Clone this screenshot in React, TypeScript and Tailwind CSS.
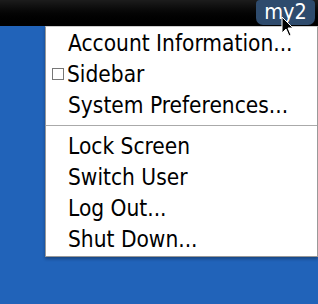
const items1 = ["Account Information...", "Sidebar", "System Preferences..."];
const items2 = ["Lock Screen", "Switch User", "Log Out...", "Shut Down..."];

function Cursor() {
  return (
    <svg
      className="absolute left-[281px] top-[16px]"
      width="14"
      height="22"
      viewBox="0 0 14 22"
    >
      <path
        d="M1 1 L1 17 L5 13 L8 20 L10 19 L7 12 L12 12 Z"
        fill="#000"
        stroke="#fff"
        strokeWidth="1"
      />
    </svg>
  );
}

function Item({ label }: { label: string }) {
  return (
    <div className="h-[31px] flex items-center pl-[22px]">
      {label === "Sidebar" && (
        <span className="-ml-[16px] mr-[3px] w-[12px] h-[12px] border border-[#777] bg-white" />
      )}
      <span>{label}</span>
    </div>
  );
}

export default function App() {
  return (
    <div
      className="relative w-[318px] h-[304px] bg-[#2163b9] overflow-hidden"
      style={{ fontFamily: '"DejaVu Sans Condensed", "DejaVu Sans", sans-serif' }}
    >
      <div className="h-[26px] bg-gradient-to-b from-[#1c1c1c] to-[#000] flex justify-end">
        <div className="h-[25px] w-[59px] mr-[3px] rounded-b-[7px] rounded-t-[4px] bg-[#2e4b6d] text-white text-[21.5px] leading-[24px] text-center">
          my2
        </div>
      </div>
      <div className="ml-[45px] w-[273px] bg-white border border-[#999] border-t-[#ccc] pb-[2px] text-[22.5px] leading-[26px] text-black shadow-[0_2px_3px_rgba(0,0,0,0.3)]">
        {items1.map((l) => (
          <Item key={l} label={l} />
        ))}
        <div className="h-[10px] flex items-center">
          <div className="h-px w-full bg-[#aaa]" />
        </div>
        {items2.map((l) => (
          <Item key={l} label={l} />
        ))}
      </div>
      <Cursor />
    </div>
  );
}
